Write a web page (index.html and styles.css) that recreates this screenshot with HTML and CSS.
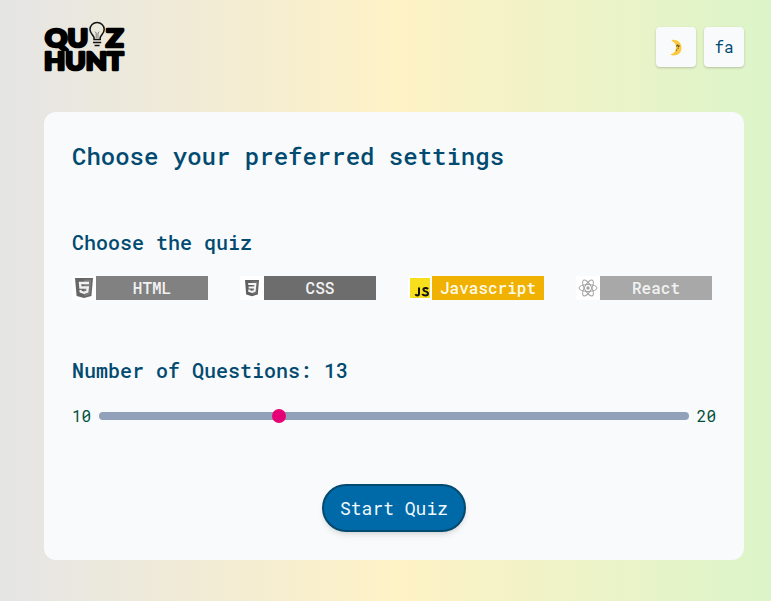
FILE: index.html
```html
<!DOCTYPE html>
<html lang="en">
<head>
<meta charset="utf-8">
<title>Quiz Hunt</title>
<link rel="stylesheet" href="styles.css">
</head>
<body>
<header class="header">
  <svg class="logo" viewBox="0 0 82 52">
    <g class="logo-text">
      <text x="1" y="27" textLength="43" lengthAdjust="spacingAndGlyphs">QU</text>
      <text x="62" y="27" textLength="17.5" lengthAdjust="spacingAndGlyphs">Z</text>
      <text x="0" y="50.3" textLength="79.5" lengthAdjust="spacingAndGlyphs">HUNT</text>
    </g>
    <g class="bulb">
      <path d="M50 19.5V17.5C49.5 15 46 13.5 46 9.6A7.1 7.1 0 0 1 60.2 9.6C60.2 13.5 56.7 15 56.2 17.5V19.5Z"/>
      <path d="M52.2 18V13L51 11.6M54 18V13L55.2 11.6" stroke-width=".5"/>
      <path d="M49 22.4H57.2M50.6 25.4H55.6"/>
    </g>
  </svg>
  <nav class="actions">
    <button class="action">
      <svg class="moon" viewBox="0 0 12 17">
        <path d="M3 .8C8 .8 11.5 4 11.5 8.8S8.2 16.5 3.5 16.5C2 16.5.7 16 .5 15.3C4 14.5 6 12 6 8.5S4.5 3 1.7 2C1.4 1.4 2 .8 3 .8Z" fill="#fcc93a"/>
        <path d="M6.3 7.2L8.3 5.7M8 8L9.5 6.5M6 11.2L7.2 11M8.1 9.8V8.8" stroke="#5d4a25" stroke-width="1.1" fill="none"/>
      </svg>
    </button>
    <button class="action">fa</button>
  </nav>
</header>
<main class="card">
  <h1 class="title">Choose your preferred settings</h1>
  <h2 class="subtitle">Choose the quiz</h2>
  <div class="quizzes">
    <div class="quiz html">
      <svg viewBox="0 0 24 24"><path d="M3 2H21L19.4 20L12 22L4.6 20Z" fill="#666"/><path d="M12 3.5H19.3L18 18.8L12 20.5Z" fill="#7c7c7c"/><path d="M17 7H8L8.4 11.5H15.8L15.3 15.7L12 16.8L8.7 15.7L8.5 13.8" fill="none" stroke="#f2f2f2" stroke-width="2.3"/></svg>
      <span>HTML</span>
    </div>
    <div class="quiz css">
      <svg viewBox="0 0 24 24"><path d="M5 4H19L17.8 18.5L12 20.2L6.2 18.5Z" fill="#606060"/><path d="M12 5H18L16.8 17.6L12 19Z" fill="#707070"/><path d="M8.2 8H15.4L14.7 15L12 16L9.2 15V13.6M8.6 11.5H15" fill="none" stroke="#f4f4f4" stroke-width="1.9"/></svg>
      <span>CSS</span>
    </div>
    <div class="quiz js">
      <svg viewBox="0 0 24 24"><path d="M2 2H22V22H2Z" fill="#f7df1e"/><path d="M11 11.6V17.8Q11 19.5 9.3 19.5Q8 19.5 7.4 18.1M20.1 13Q19.2 11.9 17.5 11.9Q15.4 11.9 15.4 13.5Q15.4 14.8 17.4 15.4Q20 16.1 20 17.6Q20 19.5 17.5 19.5Q15.2 19.5 14.2 18" fill="none" stroke="#111" stroke-width="2"/></svg>
      <span>Javascript</span>
    </div>
    <div class="quiz react">
      <svg viewBox="0 0 24 24" fill="none" stroke="#a3a3a3"><circle cx="12" cy="12" r="1.7" fill="#a3a3a3" stroke="none"/><ellipse cx="12" cy="12" rx="9" ry="3.5"/><ellipse cx="12" cy="12" rx="9" ry="3.5" transform="rotate(60 12 12)"/><ellipse cx="12" cy="12" rx="9" ry="3.5" transform="rotate(120 12 12)"/></svg>
      <span>React</span>
    </div>
  </div>
  <h2 class="subtitle count">Number of Questions: 13</h2>
  <div class="range">
    <span>10</span>
    <input type="range" min="10" max="20" value="13">
    <span>20</span>
  </div>
  <button class="start">Start Quiz</button>
</main>
</body>
</html>
```

FILE: styles.css
```css
* { box-sizing: border-box; margin: 0; }

body {
  min-height: 601px;
  padding: 20px 27px 0 44px;
  background: linear-gradient(to right, #e5e5e5, #fef2c6 52%, #dcf4c9);
  color: #004f3b;
  font: 16px/24px "Roboto Mono", "DejaVu Sans Mono", monospace;
}

.header { display: flex; justify-content: space-between; height: 92px; }
.logo { width: 82px; height: 52px; overflow: visible; }
.logo-text { font: 900 25.5px Lato, Inter, sans-serif; stroke: #000; stroke-width: 2.7; stroke-linejoin: round; }
.bulb { fill: none; stroke: #111; stroke-width: 1.5; }
.actions { display: flex; gap: 8px; padding-top: 7px; }
.action {
  display: flex; align-items: center; justify-content: center;
  width: 40px; height: 40px; padding: 0; border: 0; border-radius: 4px;
  background: #f8fafc; color: #024a70; font: inherit;
  box-shadow: 0 1px 3px rgb(0 0 0 / .1), 0 1px 2px rgb(0 0 0 / .1);
}
.moon { width: 12px; height: 17px; }

.card {
  display: flex; flex-direction: column;
  height: 448px; padding: 28px;
  border-radius: 12px; background: #f8fafc;
}
.title { color: #024a70; font-size: 24px; line-height: 32px; font-weight: 500; }
.subtitle { margin-top: 56px; color: #024a70; font-size: 20px; line-height: 28px; font-weight: 500; }
.quizzes { display: flex; gap: 32px; margin-top: 20px; }
.quiz { display: flex; width: 136px; height: 24px; color: #f2f2f2; font-weight: 500; }
.quiz svg { flex: none; width: 24px; height: 24px; background: #fff; }
.quiz span { flex: 1; text-align: center; }
.html span { background: #818181; }
.css span { background: #6d6d6d; }
.js span { background: #f0b100; color: #fffbeb; }
.react span { background: #a8a8a8; }
.range { display: flex; align-items: center; gap: 8px; margin-top: 20px; height: 24px; }
.range input {
  appearance: none; flex: 1; min-width: 0; height: 8px;
  border-radius: 4px; background: #90a1b9;
}
.range input::-webkit-slider-thumb {
  appearance: none; width: 14px; height: 14px; border-radius: 50%; background: #e60076;
}
.start {
  align-self: center; width: 144px; height: 48px; margin-top: 56px; padding: 0;
  border: 2px solid #024a70; border-radius: 24px;
  background: #0069a8; color: #f0f9ff;
  font: 18px/28px "Roboto Mono", "DejaVu Sans Mono", monospace;
  box-shadow: 0 4px 6px -1px rgb(0 0 0 / .1), 0 2px 4px -2px rgb(0 0 0 / .1);
}
```
